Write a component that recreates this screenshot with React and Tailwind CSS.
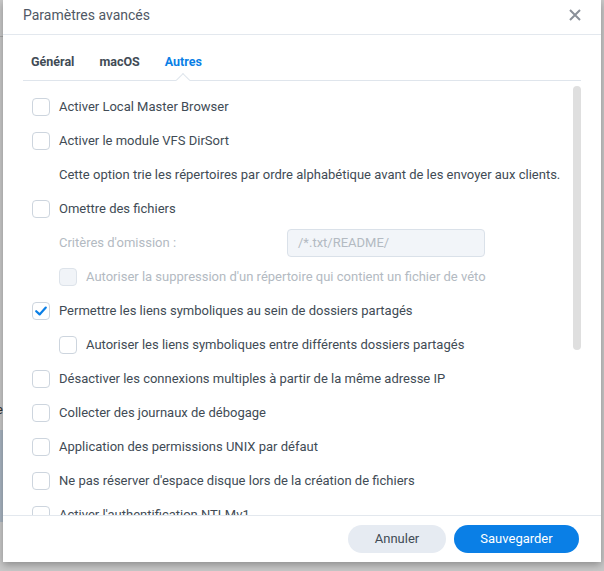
import React from 'react';

const font = { fontFamily: 'Roboto, "Liberation Sans", sans-serif' };

function Checkbox({ checked, disabled }) {
  return (
    <span
      className={`w-[18px] h-[18px] shrink-0 rounded-[4px] border flex items-center justify-center ${
        disabled ? 'bg-[#f1f4f8] border-[#dde3ea]' : 'bg-white border-[#cdd5de]'
      }`}
    >
      {checked && (
        <svg width="14" height="14" viewBox="0 0 14 14" fill="none">
          <path d="M2.2 7.2 L5.6 10.4 L11.8 3.6" stroke="#0a7fe6" strokeWidth="2.2" strokeLinecap="round" strokeLinejoin="round" />
        </svg>
      )}
    </span>
  );
}

function Row({ label, checked, disabled, indent, noBox }) {
  return (
    <div className={`h-[34px] flex items-center gap-[9px] ${indent ? 'pl-[27px]' : ''}`}>
      {noBox ? <span className="w-[18px] shrink-0" /> : <Checkbox checked={checked} disabled={disabled} />}
      <span className={`text-[13px] whitespace-nowrap ${disabled ? 'text-[#b3bac2]' : 'text-[#414b55]'}`}>{label}</span>
    </div>
  );
}

export default function App() {
  return (
    <div className="relative w-[604px] h-[571px] overflow-hidden bg-[#c9c9c9]" style={font}>
      {/* desktop behind the dialog */}
      <div className="absolute left-0 top-[36px] w-[4px] h-px bg-[#a9a9a9]" />
      <div className="absolute left-[-4px] top-[400px] text-[13px] text-[#333]">e</div>
      <div className="absolute left-0 top-[430px] w-[4px] h-[92px] bg-[#a9b5c2]" />

      {/* dialog window */}
      <div className="absolute left-[3px] top-0 w-[598px] h-[562px] bg-white flex flex-col shadow-[0_3px_8px_rgba(0,0,0,0.3)]">
        <div className="h-[35px] shrink-0 px-[20px] pb-[4px] flex items-center justify-between border-b border-[#e3e8ee]">
          <span className="text-[14px] text-[#505865]">Paramètres avancés</span>
          <svg width="12" height="12" viewBox="0 0 12 12">
            <path d="M1 1 L11 11 M11 1 L1 11" stroke="#8a9099" strokeWidth="2" />
          </svg>
        </div>

        <div className="mx-[20px] shrink-0 border-b border-[#dfe5ec] flex gap-[25px] pl-[8px]">
          <span className="pt-[19px] pb-[10px] leading-[16px] text-[12.5px] font-bold text-[#414b55]">Général</span>
          <span className="pt-[19px] pb-[10px] leading-[16px] text-[12.5px] font-bold text-[#414b55]">macOS</span>
          <span className="relative pt-[19px] pb-[10px] leading-[16px] text-[12.5px] font-bold text-[#0a7fe6]">
            Autres
            <span className="absolute left-1/2 -bottom-[5px] -ml-[5px] w-[10px] h-[10px] bg-white border-l border-t border-[#dfe5ec] rotate-45" />
          </span>
        </div>

        <div className="relative flex-1 overflow-hidden pt-[9px] pl-[29px]">
          <Row label="Activer Local Master Browser" />
          <Row label="Activer le module VFS DirSort" />
          <Row noBox label="Cette option trie les répertoires par ordre alphabétique avant de les envoyer aux clients." />
          <Row label="Omettre des fichiers" />
          <div className="h-[34px] flex items-center pl-[27px]">
            <span className="w-[228px] text-[13px] text-[#b3bac2]">Critères d'omission :</span>
            <div className="w-[198px] h-[28px] rounded-[4px] border border-[#dae1e9] bg-[#f2f5f9] flex items-center px-[10px] text-[13px] text-[#b3bac2]">
              /*.txt/README/
            </div>
          </div>
          <Row indent disabled label="Autoriser la suppression d'un répertoire qui contient un fichier de véto" />
          <Row checked label="Permettre les liens symboliques au sein de dossiers partagés" />
          <Row indent label="Autoriser les liens symboliques entre différents dossiers partagés" />
          <Row label="Désactiver les connexions multiples à partir de la même adresse IP" />
          <Row label="Collecter des journaux de débogage" />
          <Row label="Application des permissions UNIX par défaut" />
          <Row label="Ne pas réserver d'espace disque lors de la création de fichiers" />
          <Row label="Activer l'authentification NTLMv1" />

          <div className="absolute right-[20px] top-[5px] w-[8px] h-[264px] rounded-full bg-[#dfdfdf]" />
        </div>

        <div className="h-[47px] shrink-0 border-t border-[#e3e8ee] flex items-start justify-end gap-[8px] pt-[9px] pr-[22px]">
          <button className="w-[98px] h-[28px] rounded-full bg-[#e6ebf2] text-[13px] text-[#414b55]">Annuler</button>
          <button className="w-[125px] h-[28px] rounded-full bg-[#0a7fe6] text-[13px] text-white">Sauvegarder</button>
        </div>
      </div>
    </div>
  );
}
